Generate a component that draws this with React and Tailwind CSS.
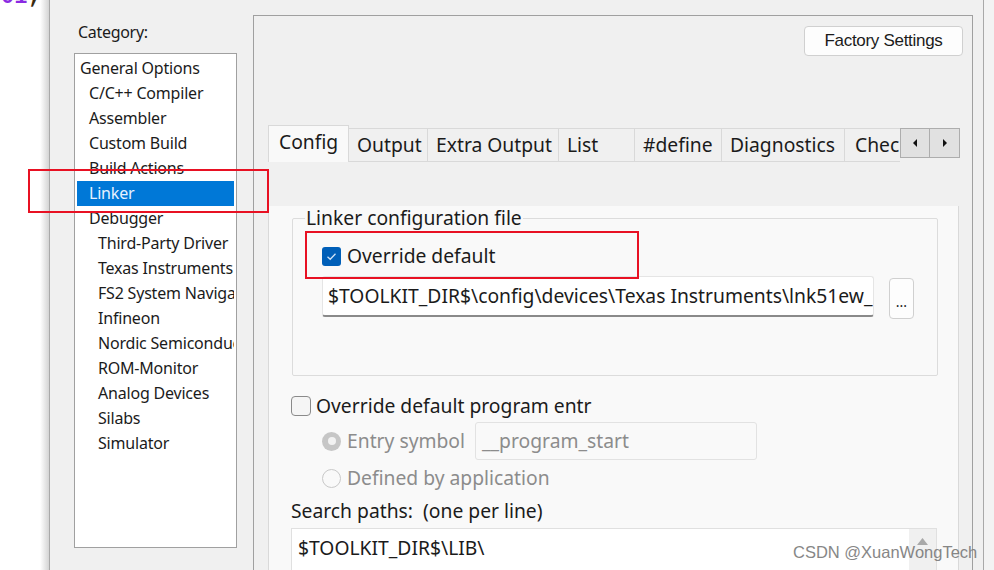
import React from 'react';

const categories = [
  { label: 'General Options', indent: 0 },
  { label: 'C/C++ Compiler', indent: 1 },
  { label: 'Assembler', indent: 1 },
  { label: 'Custom Build', indent: 1 },
  { label: 'Build Actions', indent: 1 },
  { label: 'Linker', indent: 1, selected: true },
  { label: 'Debugger', indent: 1 },
  { label: 'Third-Party Driver', indent: 2 },
  { label: 'Texas Instruments', indent: 2 },
  { label: 'FS2 System Navigator', indent: 2 },
  { label: 'Infineon', indent: 2 },
  { label: 'Nordic Semiconductor', indent: 2 },
  { label: 'ROM-Monitor', indent: 2 },
  { label: 'Analog Devices', indent: 2 },
  { label: 'Silabs', indent: 2 },
  { label: 'Simulator', indent: 2 },
];

const tabs = [
  { label: 'Config', w: 'w-[81px]', active: true },
  { label: 'Output', w: 'w-[79px]' },
  { label: 'Extra Output', w: 'w-[131px]' },
  { label: 'List', w: 'w-[76px]' },
  { label: '#define', w: 'w-[87px]' },
  { label: 'Diagnostics', w: 'w-[123px]' },
];

const indentClass = ['pl-[3px]', 'pl-[12px]', 'pl-[21px]'];

const Arrow = ({ dir }) => (
  <svg width="6" height="10" viewBox="0 0 6 10">
    {dir === 'left' ? <polygon points="5,1 5,9 1,5" fill="#111" /> : <polygon points="1,1 1,9 5,5" fill="#111" />}
  </svg>
);

const App = () => {
  return (
    <div className="relative w-[994px] h-[570px] overflow-hidden flex bg-[#f3f3f3] font-['Noto_Sans',sans-serif] text-[#1b1b1b]">
      {/* editor behind the dialog */}
      <div className="w-[49px] shrink-0 h-full bg-gradient-to-r from-white from-[82%] to-[#d4d4d4] overflow-hidden">
        <div className="-mt-[15px] pl-[1px] font-['Liberation_Mono',monospace] font-bold text-[22px] leading-[26px] whitespace-nowrap">
          <span className="text-[#8a2be2]">01</span>
          <span className="text-[#3a2a10]">;</span>
        </div>
      </div>

      {/* dialog */}
      <div className="w-[935px] shrink-0 h-full bg-[#f0f0f0] border-l border-r border-[#a9a9a9] flex">
        {/* category list */}
        <div className="w-[203px] shrink-0 pl-[24px] pt-[20px]">
          <div className="text-[16px] leading-[24px] tracking-[-0.3px] pl-[4px]">Category:</div>
          <div className="mt-[9px] w-[163px] h-[495px] bg-white border border-[#a0a0a0] pt-[2px] px-[2px] overflow-hidden">
            {categories.map((c) => (
              <div
                key={c.label}
                className={`h-[25px] leading-[25px] text-[16px] tracking-[-0.2px] whitespace-nowrap overflow-hidden ${indentClass[c.indent]} ${
                  c.selected ? 'bg-[#0078d7] text-[#e6f2ff]' : ''
                }`}
              >
                {c.label}
              </div>
            ))}
          </div>
        </div>

        {/* options panel */}
        <div className="mt-[15px] w-[720px] h-[600px] shrink-0 border border-[#a0a0a0] bg-[#f0f0f0] pl-[14px]">
          <div className="flex justify-end pr-[9px] mt-[10px]">
            <button className="w-[159px] h-[30px] rounded-[4px] bg-[#fdfdfd] border border-[#d0d0d0] text-[17px] tracking-[-0.3px] font-['Liberation_Sans',sans-serif] text-[#1b1b1b]">
              Factory Settings
            </button>
          </div>

          {/* tabs */}
          <div className="mt-[69px] flex items-start h-[37px] text-[19.3px]">
            {tabs.map((t) =>
              t.active ? (
                <div
                  key={t.label}
                  className={`${t.w} h-[37px] bg-[#f9f9f9] border border-b-0 border-[#d9d9d9] flex items-center pl-[10px] pb-[3px]`}
                >
                  {t.label}
                </div>
              ) : (
                <div
                  key={t.label}
                  className={`${t.w} mt-[3px] h-[34px] bg-[#f0f0f0] border-t border-r border-b border-[#d9d9d9] flex items-center pl-[8px] whitespace-nowrap`}
                >
                  {t.label}
                </div>
              )
            )}
            <div className="w-[55px] mt-[3px] h-[34px] border-t border-b border-[#d9d9d9] flex items-center pl-[10px] overflow-hidden whitespace-nowrap">
              Check
            </div>
            <div className="mt-[3px] flex">
              <div className="w-[30px] h-[30px] bg-[#e1e1e1] border border-[#adadad] flex items-center justify-center">
                <Arrow dir="left" />
              </div>
              <div className="w-[30px] h-[30px] bg-[#e1e1e1] border border-l-0 border-[#adadad] flex items-center justify-center">
                <Arrow dir="right" />
              </div>
            </div>
          </div>

          {/* tab content */}
          <div className="w-[691px] h-[420px] bg-[#f9f9f9] border border-t-0 border-[#d9d9d9] text-[19.3px]">
            <fieldset className="ml-[23px] mt-[44px] w-[646px] h-[170px] border border-[#dcdcdc] rounded-[2px]">
              <legend className="ml-[12px] px-[1px] leading-[24px]">Linker configuration file</legend>
              <div className="ml-[29px] mt-[14px] h-[24px] flex items-center gap-[6px]">
                <div className="w-[19px] h-[19px] rounded-[3px] bg-[#005fb8] flex items-center justify-center">
                  <svg width="11" height="9" viewBox="0 0 11 9">
                    <path d="M1.5 4.8 L4.2 7.3 L9.5 1.7" fill="none" stroke="#cfe3f7" strokeWidth="1.3" />
                  </svg>
                </div>
                <span>Override default</span>
              </div>
              <div className="ml-[29px] mt-[8px] flex items-start">
                <div className="w-[552px] h-[41px] bg-white border border-[#e5e5e5] border-b-2 border-b-[#8a8a8a] rounded-[3px] pl-[5px] flex items-center whitespace-nowrap overflow-hidden">
                  $TOOLKIT_DIR$\config\devices\Texas Instruments\lnk51ew_
                </div>
                <div className="ml-[15px] mt-[2px] w-[25px] h-[41px] bg-[#fdfdfd] border border-[#d0d0d0] rounded-[4px] flex items-end justify-center pb-[9px] text-[14px] leading-none">
                  ...
                </div>
              </div>
            </fieldset>

            <div className="ml-[22px]">
              <div className="mt-[18px] h-[24px] flex items-center gap-[5px]">
                <div className="w-[20px] h-[20px] rounded-[4px] border border-[#8a8a8a] bg-[#f5f5f5]" />
                <span>Override default program entr</span>
              </div>
              <div className="mt-[4px] ml-[31px] flex items-center text-[#8c8c8c]">
                <div className="w-[19px] h-[19px] rounded-full bg-[#c6c6c6] flex items-center justify-center">
                  <div className="w-[8px] h-[8px] rounded-full bg-[#f2f2f2]" />
                </div>
                <span className="ml-[6px] w-[128px] whitespace-nowrap">Entry symbol</span>
                <div className="w-[282px] h-[38px] border border-[#e2e2e2] rounded-[3px] bg-[#f9f9f9] pl-[6px] flex items-center">
                  __program_start
                </div>
              </div>
              <div className="mt-[6px] ml-[31px] h-[24px] flex items-center text-[#8c8c8c]">
                <div className="w-[19px] h-[19px] rounded-full border border-[#c8c8c8] bg-[#f9f9f9]" />
                <span className="ml-[6px]">Defined by application</span>
              </div>
              <div className="mt-[9px] h-[24px] leading-[24px] whitespace-pre">Search paths:  (one per line)</div>
              <div className="mt-[5px] w-[646px] h-[80px] bg-white border border-[#e0e0e0] flex">
                <div className="flex-1 pl-[6px] pt-[7px] leading-[24px]">$TOOLKIT_DIR$\LIB\</div>
                <div className="w-[27px] bg-[#f0f0f0] flex justify-center pt-[9px]">
                  <svg width="11" height="7" viewBox="0 0 11 7">
                    <polygon points="0,7 5.5,0 11,7" fill="#a8a8a8" />
                  </svg>
                </div>
              </div>
            </div>
          </div>
        </div>
      </div>

      {/* annotation boxes */}
      <div className="absolute left-[28px] top-[169px] w-[241px] h-[44px] border-2 border-[#e81123]" />
      <div className="absolute left-[305px] top-[231px] w-[334px] h-[48px] border-2 border-[#e81123]" />

      {/* watermark */}
      <div className="absolute left-[793px] top-[540px] font-['Liberation_Sans',sans-serif] text-[16.5px] text-[#7a7a7a] opacity-90 whitespace-nowrap">
        CSDN @XuanWongTech
      </div>
    </div>
  );
};

export default App;
